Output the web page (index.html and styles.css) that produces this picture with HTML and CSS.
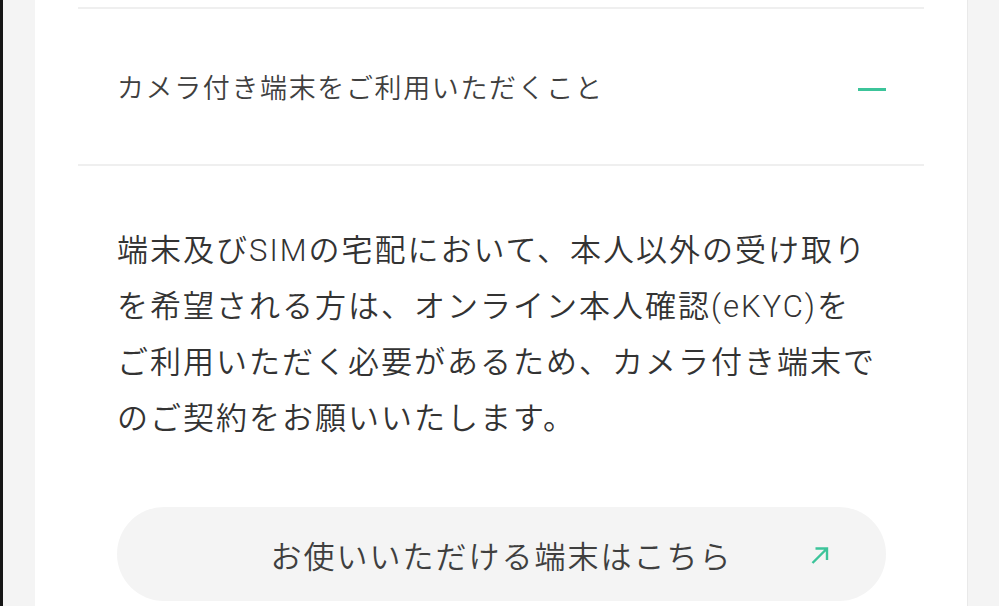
FILE: index.html
```html
<html>
<head>
<title>カメラ付き端末をご利用いただくこと</title>
<link rel="stylesheet" href="styles.css">
</head>
<body>

<div class="page">
	<div class="card">
		<div class="faq_item">
			<div class="faq_head">
				<span class="faq_title">カメラ付き端末をご利用いただくこと</span>
				<span class="faq_toggle"></span>
			</div>
			<div class="faq_body">
				<p class="faq_text">端末及びSIMの宅配において、本人以外の受け取り<br>を希望される方は、オンライン本人確認(eKYC)を<br>ご利用いただく必要があるため、カメラ付き端末で<br>のご契約をお願いいたします。</p>
				<a class="link_btn" href="#">
					<span class="link_label">お使いいただける端末はこちら</span>
					<svg class="link_arrow" width="22" height="22" viewBox="0 0 22 22">
						<path d="M3.5 19 L17.5 5 M6.5 4.5 H18 V16" fill="none" stroke="#3cc49a" stroke-width="2.4"/>
					</svg>
				</a>
			</div>
		</div>
	</div>
</div>

</body>
</html>
```

FILE: styles.css
```css
body { margin: 0; background-color: #f4f4f4; font-family: Roboto, "Noto Sans CJK JP", sans-serif; }
.page
{
	border-left: 3px solid #151515;
	height: 606px;
	overflow: hidden;
	padding-left: 32px;
}
.card
{
	width: 933px;
	height: 100%;
	background-color: white;
	border-right: 1px solid #e9e9e9;
	padding: 7px 43px 0 43px;
	box-sizing: border-box;
}
.faq_item { border-top: 2px solid #efefef; }
.faq_head
{
	display: flex;
	align-items: center;
	justify-content: space-between;
	padding: 60px 38px 55px 39px;
	border-bottom: 2px solid #efefef;
	line-height: 40px;
}
.faq_title { font-size: 27px; font-weight: 350; letter-spacing: 0.06em; color: #3f3f3f; }
.faq_toggle { width: 28px; height: 3px; background-color: #3cc49a; margin-top: 1px; }
.faq_body { padding: 57px 38px 0 39px; }
.faq_text
{
	margin: 0;
	font-size: 31px;
	font-weight: 350;
	line-height: 56px;
	letter-spacing: 2px;
	color: #333;
	white-space: nowrap;
}
.link_btn
{
	display: flex;
	align-items: center;
	justify-content: center;
	position: relative;
	height: 94px;
	margin-top: 60px;
	border-radius: 47px;
	background-color: #f4f4f4;
	text-decoration: none;
}
.link_label { font-size: 31px; font-weight: 350; letter-spacing: 2px; color: #3f3f3f; }
.link_arrow { position: absolute; right: 55px; top: 37px; }
```
